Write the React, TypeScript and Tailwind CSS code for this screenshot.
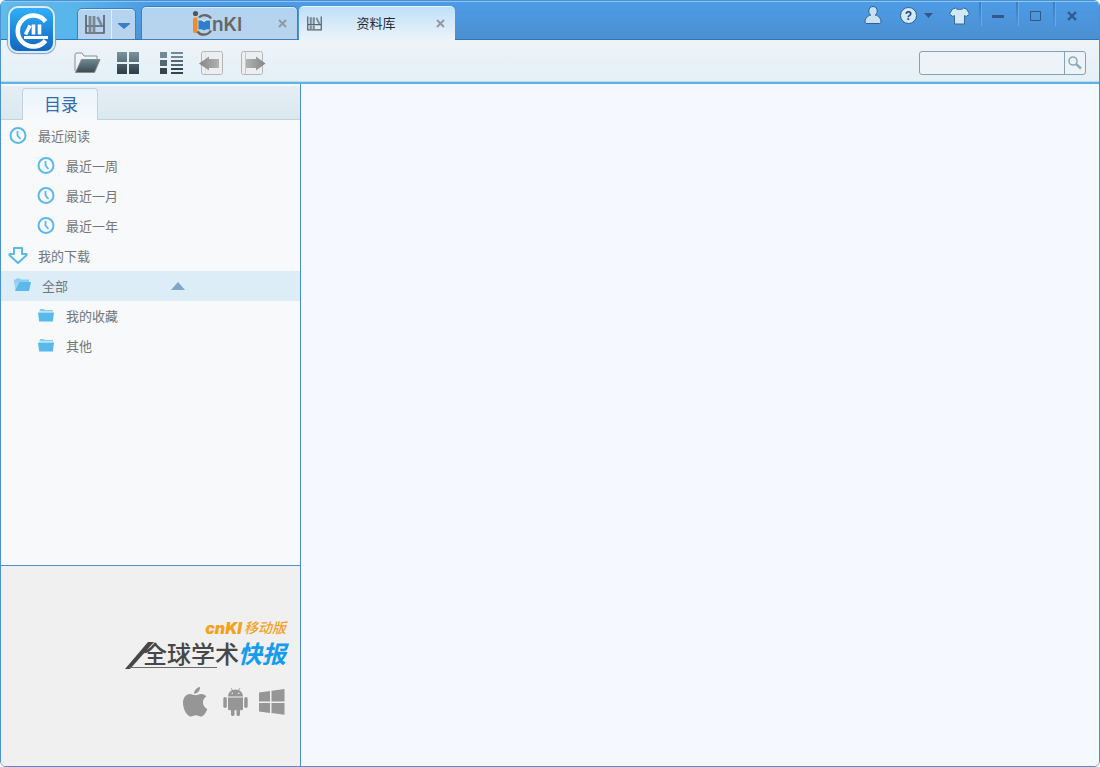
import type { ReactNode } from "react";
import { clsx } from "clsx";

type TreeIcon = "clock" | "download" | "open" | "folder";

type TreeItem = {
  label: string;
  icon: TreeIcon;
  nested?: boolean;
  selected?: boolean;
};

const treeItems: TreeItem[] = [
  { label: "最近阅读", icon: "clock" },
  { label: "最近一周", icon: "clock", nested: true },
  { label: "最近一月", icon: "clock", nested: true },
  { label: "最近一年", icon: "clock", nested: true },
  { label: "我的下载", icon: "download" },
  { label: "全部", icon: "open", selected: true },
  { label: "我的收藏", icon: "folder", nested: true },
  { label: "其他", icon: "folder", nested: true },
];

export default function App() {
  return (
    <div className="flex min-h-screen flex-col overflow-hidden rounded-t-md rounded-b-md border border-[#4a90d2] bg-[#f6f9fe] font-['Liberation_Sans','Noto_Sans_CJK_SC',sans-serif]">
      <TitleBar />
      <Toolbar />
      <div className="flex flex-1">
        <Sidebar />
        <main className="flex-1 bg-[#f5f9ff]" />
      </div>
    </div>
  );
}

function TitleBar() {
  return (
    <header className="relative flex h-[39px] items-end border-t border-[#8cc6f6] bg-linear-to-b from-[#4d9be6] to-[#4b90d0] shadow-[inset_0_-1px_0_#2f74b4]">
      <div className="absolute inset-y-0 left-0 w-[150px] bg-linear-to-r from-[#5dbcec] via-[#58b5ea] to-transparent shadow-[inset_0_-1px_0_#2f74b4]" />
      <button
        aria-label="主菜单"
        className="absolute top-[4px] left-[7px] z-10 flex size-[47px] items-center justify-center rounded-[10px] border-2 border-[#d8ecfa] bg-linear-to-b from-[#2fb0f8] to-[#1266bd] shadow-[0_0_1px_1px_#7da4c4]"
        type="button"
      >
        <AppLogo />
      </button>
      <div className="relative ml-[76px] flex h-[32px] w-[59px] rounded-t-[5px] border border-[#3f7fbd] bg-linear-to-b from-[#b4d4f0] to-[#b9d3ec] shadow-[inset_0_1px_0_#d9ecfb]">
        <button aria-label="资料库" className="flex flex-1 items-center justify-center" type="button">
          <ShelfIcon className="h-[19px] w-[20px]" />
        </button>
        <button
          aria-label="展开"
          className="flex w-[24px] items-center justify-center border-l border-[#e1effb] pt-[4px]"
          type="button"
        >
          <svg className="h-[6px] w-[12px]" viewBox="0 0 12 6" aria-hidden="true">
            <path d="M0 0h12v1L6 6 0 1z" fill="#3a7fc3" />
          </svg>
        </button>
      </div>
      <div className="relative ml-[5px] flex h-[34px] w-[157px] items-center rounded-t-[5px] border border-[#3f7fbd] bg-linear-to-b from-[#b1d4f2] to-[#b9d3ec] shadow-[inset_0_1px_0_#d9ecfb]">
        <a className="flex flex-1 justify-center pl-[16px]" href="#cnki" aria-label="CNKI">
          <CnkiLogo />
        </a>
        <CloseTab />
      </div>
      <div className="relative ml-[1px] flex h-[34px] w-[156px] items-center rounded-t-[5px] border-t border-[#e6f4fd] bg-linear-to-b from-[#bfe0f8] to-[#ecf3f9]">
        <ShelfIcon className="ml-[8px] size-[15px]" />
        <a className="flex-1 pr-[6px] text-center text-[13px] text-[#1d2c3c]" href="#library">
          资料库
        </a>
        <CloseTab />
      </div>
      <WindowControls />
    </header>
  );
}

function CloseTab() {
  return (
    <button aria-label="关闭标签" className="mr-[9px] flex h-5 w-[10px] items-center" type="button">
      <svg className="size-[9px]" viewBox="0 0 9 9" aria-hidden="true">
        <path d="M1 1l7 7M8 1L1 8" stroke="#91989f" strokeWidth="1.9" />
      </svg>
    </button>
  );
}

function WindowControls() {
  return (
    <div className="ml-auto flex h-[38px] items-start pr-[9px]">
      <button aria-label="用户" className="mt-[3px] mr-[17px]" type="button">
        <svg className="h-[20px] w-[20px]" viewBox="0 0 20 20" aria-hidden="true">
          <path
            d="M10 1.500c2.700 0 4.200 2 4.200 4.400 0 2-.8 3.300-2 4.100 3.100.8 5.600 2.800 5.800 7.200 0 .8-.5 1.300-1.300 1.300H3.300c-.8 0-1.300-.5-1.300-1.300.2-4.400 2.700-6.400 5.800-7.200-1.200-.8-2-2.100-2-4.100C5.800 3.500 7.300 1.500 10 1.500z"
            fill="#c6e2f1"
            stroke="#345d92"
          />
        </svg>
      </button>
      <button aria-label="帮助" className="mt-[5px] flex items-center gap-[7px]" type="button">
        <span className="flex size-[17px] items-center justify-center rounded-full border border-[#345d92] bg-[#d3eaf6] text-[12px] leading-none font-bold text-[#22457c]">
          ?
        </span>
        <svg className="h-[5px] w-[9px]" viewBox="0 0 9 5" aria-hidden="true">
          <path d="M0 0h9L4.500 5z" fill="#34568b" />
        </svg>
      </button>
      <button aria-label="皮肤" className="mt-[5px] ml-[16px] mr-[9px]" type="button">
        <svg className="h-[18px] w-[21px]" viewBox="0 0 21 18" aria-hidden="true">
          <path
            d="M6.500 1C8 3 13 3 14.500 1l3 1L20.500 7l-3.300 2.500-1.700-1v8.500h-10V8.500l-1.700 1L.5 7l3-5z"
            fill="#d0eaf5"
            stroke="#3b669b"
          />
        </svg>
      </button>
      <ControlButton label="最小化">
        <path d="M1 7h12v3H1z" fill="#34568b" />
      </ControlButton>
      <ControlButton label="最大化">
        <path d="M3 4h10v9H3z" fill="none" stroke="#34568b" transform="translate(-.5 -.5)" />
      </ControlButton>
      <ControlButton label="关闭">
        <path d="M3 4l8 8M11 4l-8 8" stroke="#34568b" strokeWidth="2.400" />
      </ControlButton>
    </div>
  );
}

function ControlButton({ label, children }: { label: string; children: ReactNode }) {
  return (
    <button aria-label={label} className="flex w-[37px] items-start" type="button">
      <span className="h-[24px] w-[2px] bg-linear-to-b from-[#3a7cc0] to-transparent shadow-[1px_0_0_#65a9e6]" />
      <svg className="mx-auto mt-[6px] size-[16px]" viewBox="0 0 16 16" aria-hidden="true">
        {children}
      </svg>
    </button>
  );
}

function Toolbar() {
  return (
    <div className="flex h-[44px] items-center justify-between border-b-2 border-[#5ab4e8] bg-linear-to-b from-[#eef3f7] via-[#e9f1f8] to-[#e3f1f7] pt-[3px] pr-[13px] pl-[72px] shadow-[inset_0_-1px_0_#c4d7e3]">
      <div className="flex items-center gap-[15px]">
        <button aria-label="打开" type="button">
          <svg className="h-[24px] w-[28px]" viewBox="0 0 28 24" aria-hidden="true">
            <path d="M2 20V3.500L3 2h6l2 3h13v4" fill="#eef4f8" stroke="#848f98" />
            <path d="M8.500 8.500H27L21.500 21.500h-19z" fill="url(#toolTone)" stroke="#87898b" />
            <defs>
              <linearGradient id="toolTone" x1="0" x2="0" y1="0" y2="1">
                <stop stopColor="#6e8a94" />
                <stop offset="1" stopColor="#3a4a52" />
              </linearGradient>
            </defs>
          </svg>
        </button>
        <button aria-label="缩略图" className="ml-px grid grid-cols-2 gap-[2px]" type="button">
          <span className="size-[10px] bg-linear-to-b from-[#7b949e] to-[#5b7480]" />
          <span className="size-[10px] bg-linear-to-b from-[#7b949e] to-[#5b7480]" />
          <span className="size-[10px] bg-linear-to-b from-[#4b5e68] to-[#2f3c45]" />
          <span className="size-[10px] bg-linear-to-b from-[#4b5e68] to-[#2f3c45]" />
        </button>
        <button aria-label="列表" className="ml-[4px]" type="button">
          <svg className="h-[22px] w-[26px]" viewBox="0 0 26 22" aria-hidden="true">
            <path d="M2 0h7v6H2zM13 0h12v2H13zM13 4h12v2H13z" fill="#708a96" />
            <path d="M2 8h7v6H2zM13 8h12v2H13zM13 12h12v2H13z" fill="#526974" />
            <path d="M2 16h7v6H2zM13 16h12v2H13zM13 20h12v2H13z" fill="#35444d" />
          </svg>
        </button>
        <button aria-label="后退" type="button">
          <ArrowIcon />
        </button>
        <button aria-label="前进" type="button">
          <ArrowIcon forward />
        </button>
      </div>
      <form className="flex h-[24px] w-[167px] overflow-hidden rounded-[3px] border border-[#86a3b5] bg-[#eef3f7]">
        <input aria-label="搜索" className="min-w-0 flex-1 px-2 text-[13px] outline-none" type="text" />
        <button
          aria-label="搜索"
          className="flex w-[21px] items-center justify-center border-l border-[#86a3b5]"
          type="button"
        >
          <svg className="size-[14px]" viewBox="0 0 14 14" aria-hidden="true">
            <circle cx="5" cy="5" r="4" fill="none" stroke="#8eabbb" strokeWidth="1.600" />
            <path d="M8 8l5 4.500" stroke="#8eabbb" strokeWidth="2.400" />
          </svg>
        </button>
      </form>
    </div>
  );
}

function ArrowIcon({ forward }: { forward?: boolean }) {
  return (
    <svg className="h-[24px] w-[26px]" viewBox="0 0 26 24" aria-hidden="true">
      <defs>
        <linearGradient id="arrowTone">
          <stop stopColor="#858585" />
          <stop offset="1" stopColor="#b2b2b2" />
        </linearGradient>
        <linearGradient id="arrowToneForward">
          <stop stopColor="#b2b2b2" />
          <stop offset="1" stopColor="#858585" />
        </linearGradient>
      </defs>
      {forward ? (
        <>
          <rect x="1.500" y=".5" width="21" height="23" rx="2" fill="#eceeef" stroke="#b1b6b9" />
          <path d="M5.500 1v22" stroke="#c6cacc" />
          <path d="M6 8h10V5.500L25.500 12.500 16 19.500V17H6z" fill="url(#arrowToneForward)" />
        </>
      ) : (
        <>
          <rect x="2.500" y=".5" width="21" height="23" rx="2" fill="#eceeef" stroke="#b1b6b9" />
          <path d="M6.500 1v22" stroke="#dde0e2" />
          <path d="M20 8H10V5.500L0 12.500l10 7V17h10z" fill="url(#arrowTone)" />
        </>
      )}
    </svg>
  );
}

function Sidebar() {
  return (
    <aside className="flex w-[300px] shrink-0 flex-col border-r border-[#4b90d2] bg-[#f7f9fb]">
      <div className="flex h-[36px] items-end border-t-2 border-[#f4f8fa] bg-linear-to-b from-[#e6eef3] to-[#d9e8f0] pl-[21px] shadow-[inset_0_-1px_0_#c3d3dd]">
        <button
          className="h-[32px] w-[76px] rounded-t-[4px] border border-b-0 border-[#c3d3dd] bg-linear-to-b from-[#e9f5fc] to-[#f7f9fb] pt-[2px] pl-[2px] text-[17px] text-[#2e6cad]"
          type="button"
        >
          目录
        </button>
      </div>
      <ul className="flex-1 pt-px">
        {treeItems.map((item) => (
          <TreeRow item={item} key={item.label} />
        ))}
      </ul>
      <div className="flex h-[201px] flex-col items-end border-t border-[#4b90d2] bg-[#f0f0f0] pt-[52px] pr-[12px]">
        <MobilePromo />
      </div>
    </aside>
  );
}

function TreeRow({ item }: { item: TreeItem }) {
  return (
    <li className={clsx(item.selected && "bg-[#dcedf8]")}>
      <button
        className={clsx(
          "flex h-[30px] w-full items-center text-left text-[13px] text-[#757575]",
          item.nested ? "pl-[36px]" : "pl-[8px]",
        )}
        type="button"
      >
        <TreeGlyph icon={item.icon} />
        <span className={clsx("mt-[2px]", item.selected ? "ml-[15px] w-[129px]" : "ml-[11px]")}>{item.label}</span>
        {item.selected && (
          <svg className="h-[8px] w-[14px]" viewBox="0 0 14 8" aria-hidden="true">
            <path d="M7 0l7 8H0z" fill="#7fa5c7" />
          </svg>
        )}
      </button>
    </li>
  );
}

function TreeGlyph({ icon }: { icon: TreeIcon }) {
  return (
    <svg className="size-[18px] shrink-0 overflow-visible" viewBox="0 0 18 18" aria-hidden="true">
      {icon === "clock" && (
        <g fill="none" stroke="#5ab9ea">
          <circle cx="9" cy="8.500" r="7.500" strokeWidth="2" />
          <path d="M8.500 4v4.500l3 3.500" strokeWidth="1.800" />
        </g>
      )}
      {icon === "download" && (
        <path
          d="M5 1h8v6h4.500v1.300L9 16 .5 8.300V7H5z"
          fill="none"
          stroke="#5ab9ea"
          strokeLinejoin="round"
          strokeWidth="2"
        />
      )}
      {icon === "folder" && (
        <g fill="#58b9eb">
          <path d="M3 3V2h4l1 1h8v1.500H2.500V3z" opacity=".7" />
          <path d="M1 5.500h16L15.800 14.500H2.200z" />
        </g>
      )}
      {icon === "open" && (
        <g fill="#58b9eb" transform="translate(4 .5)">
          <path d="M3 2V1h4l1 1h8v2.500H1V2z" opacity=".6" />
          <path d="M1 4.500h6L2.500 13z" opacity=".5" />
          <path d="M6.500 4.500H18L16 13.500H2z" />
        </g>
      )}
    </svg>
  );
}

function MobilePromo() {
  return (
    <>
      <a className="flex flex-col items-end" href="#mobile">
        <span className="flex h-[20px] items-center pr-[2px] text-[14px] leading-none text-[#f5a11c] italic">
          <span className="mr-[2px] font-['Inter','Liberation_Sans',sans-serif] text-[16px] font-black">cnKI</span>
          <span className="font-medium">移动版</span>
        </span>
        <span className="relative flex h-[34px] items-center pr-[2px] text-[24px] leading-none">
          <svg className="-mr-[12px] h-[27px] w-[30px]" viewBox="0 0 30 27" aria-hidden="true">
            <path d="M0 27L23 0h6L5 27z" fill="#474747" />
          </svg>
          <span className="font-medium text-[#474747]">全球学术</span>
          <span className="-ml-px font-bold text-[#169cec] italic">快报</span>
          <svg className="absolute bottom-[3px] left-[4px] h-[2px] w-[88px]" viewBox="0 0 88 2" aria-hidden="true">
            <path d="M0 0h88v1H0z" fill="#6c6c6c" />
          </svg>
        </span>
      </a>
      <div className="mt-[15px] flex items-center gap-[15px] pr-[3px]">
        <svg className="h-[30px] w-[26px]" viewBox="0 0 26 30" fill="#969696" aria-label="Apple" role="img">
          <path d="M18 0c.3 3.500-2.500 6.700-6 6.800C11.700 3.700 14.800.4 18 0z" />
          <path d="M21 15.500c0-3 1.500-4.800 3.400-5.900-1.600-2.100-3.900-2.600-5.400-2.600-2.400 0-4 1.300-5.500 1.300S10 7 7.700 7C4 7 1 10.500 1 16c0 6.500 4.300 13.500 7.800 13.500 2 0 3-1.200 5-1.200s3 1.200 5 1.200c3 0 5.500-4.500 6.400-7.600-2.600-1.200-4.200-3.400-4.200-6.400z" />
        </svg>
        <svg className="h-[28px] w-[25px]" viewBox="0 0 25 28" fill="#969696" aria-label="Android" role="img">
          <path d="M5 8.500c.2-3.200 1.800-5.200 4-6.300L7.700.4l.6-.4L9.800 1.900a9 9 0 0 1 5.400 0L16.700 0l.6.4L16 2.200c2.200 1.100 3.800 3.100 4 6.300z" />
          <path d="M5 9.500h15v11.300a1.500 1.500 0 0 1-1.500 1.500H17v4a1.700 1.700 0 0 1-3.500 0v-4h-2v4a1.700 1.700 0 0 1-3.500 0v-4H6.500A1.500 1.500 0 0 1 5 20.800z" />
          <rect x=".3" y="9" width="3.500" height="11" rx="1.700" />
          <rect x="21.200" y="9" width="3.500" height="11" rx="1.700" />
          <circle cx="9.300" cy="5.300" r=".8" fill="#f0f0f0" />
          <circle cx="15.700" cy="5.300" r=".8" fill="#f0f0f0" />
        </svg>
        <svg className="-ml-[4px] h-[26px] w-[26px]" viewBox="0 0 26 26" fill="#969696" aria-label="Windows" role="img">
          <path d="M0 3.500L11 2v10.500H0zM12.500 1.800L25.500 0v12.500h-13zM0 14h11v10L0 22.500zM12.500 14h13v11.700l-13-1.700z" />
        </svg>
      </div>
    </>
  );
}

function AppLogo() {
  return (
    <svg className="size-[38px] shrink-0" viewBox="0 0 38 38" fill="none" stroke="#fff" aria-hidden="true">
      <path d="M32.500 10.500A15.500 15.500 0 1 0 32.500 29.500" strokeWidth="4.600" />
      <path d="M12.500 23.500l4.500-9M20.500 23.500V13.500M26.500 23.500V13.500" strokeWidth="3.600" />
      <path d="M11 26.500h24" strokeWidth="3" />
    </svg>
  );
}

function ShelfIcon({ className }: { className: string }) {
  return (
    <svg className={className} viewBox="0 0 20 19" fill="none" stroke="#59646e" aria-hidden="true">
      <path d="M1 0v18h18V0M1 11h18" strokeWidth="1.700" />
      <path d="M5 1v9M9 1v9M5 12v5M9 12v5" stroke="#7b8993" strokeWidth="2.800" />
      <path d="M12.500 2l4 8" stroke="#7b8993" strokeWidth="2.600" />
    </svg>
  );
}

function CnkiLogo() {
  return (
    <svg className="h-[26px] w-[54px]" viewBox="0 0 54 26" aria-hidden="true">
      <circle cx="4.500" cy="3.500" r="2.600" fill="#555" />
      <path d="M2 9q0-1.500 2-1.500h2.500V23H4q-2 0-2-2z" fill="#f68b1e" />
      <path d="M20 8.500C18 4.500 11 4 8 7.500M6.500 21.500C9.500 26 17 25.500 20 20.500" fill="none" stroke="#666" strokeWidth="2.400" />
      <path d="M7.500 10q3-1 5.500 1.500 2.500-2.500 6-1.500v9.500q-3.500-1-6 1-2.500-2-5.500-1z" fill="#2e7fc8" />
      <path d="M7.500 10q3-1 5.500 1.500 2.500-2.500 6-1.500" fill="none" stroke="#e7f3fd" />
      <text x="21" y="21" fill="#666" fontFamily="Inter, Liberation Sans, sans-serif" fontSize="19" fontWeight="600">
        nKI
      </text>
    </svg>
  );
}
